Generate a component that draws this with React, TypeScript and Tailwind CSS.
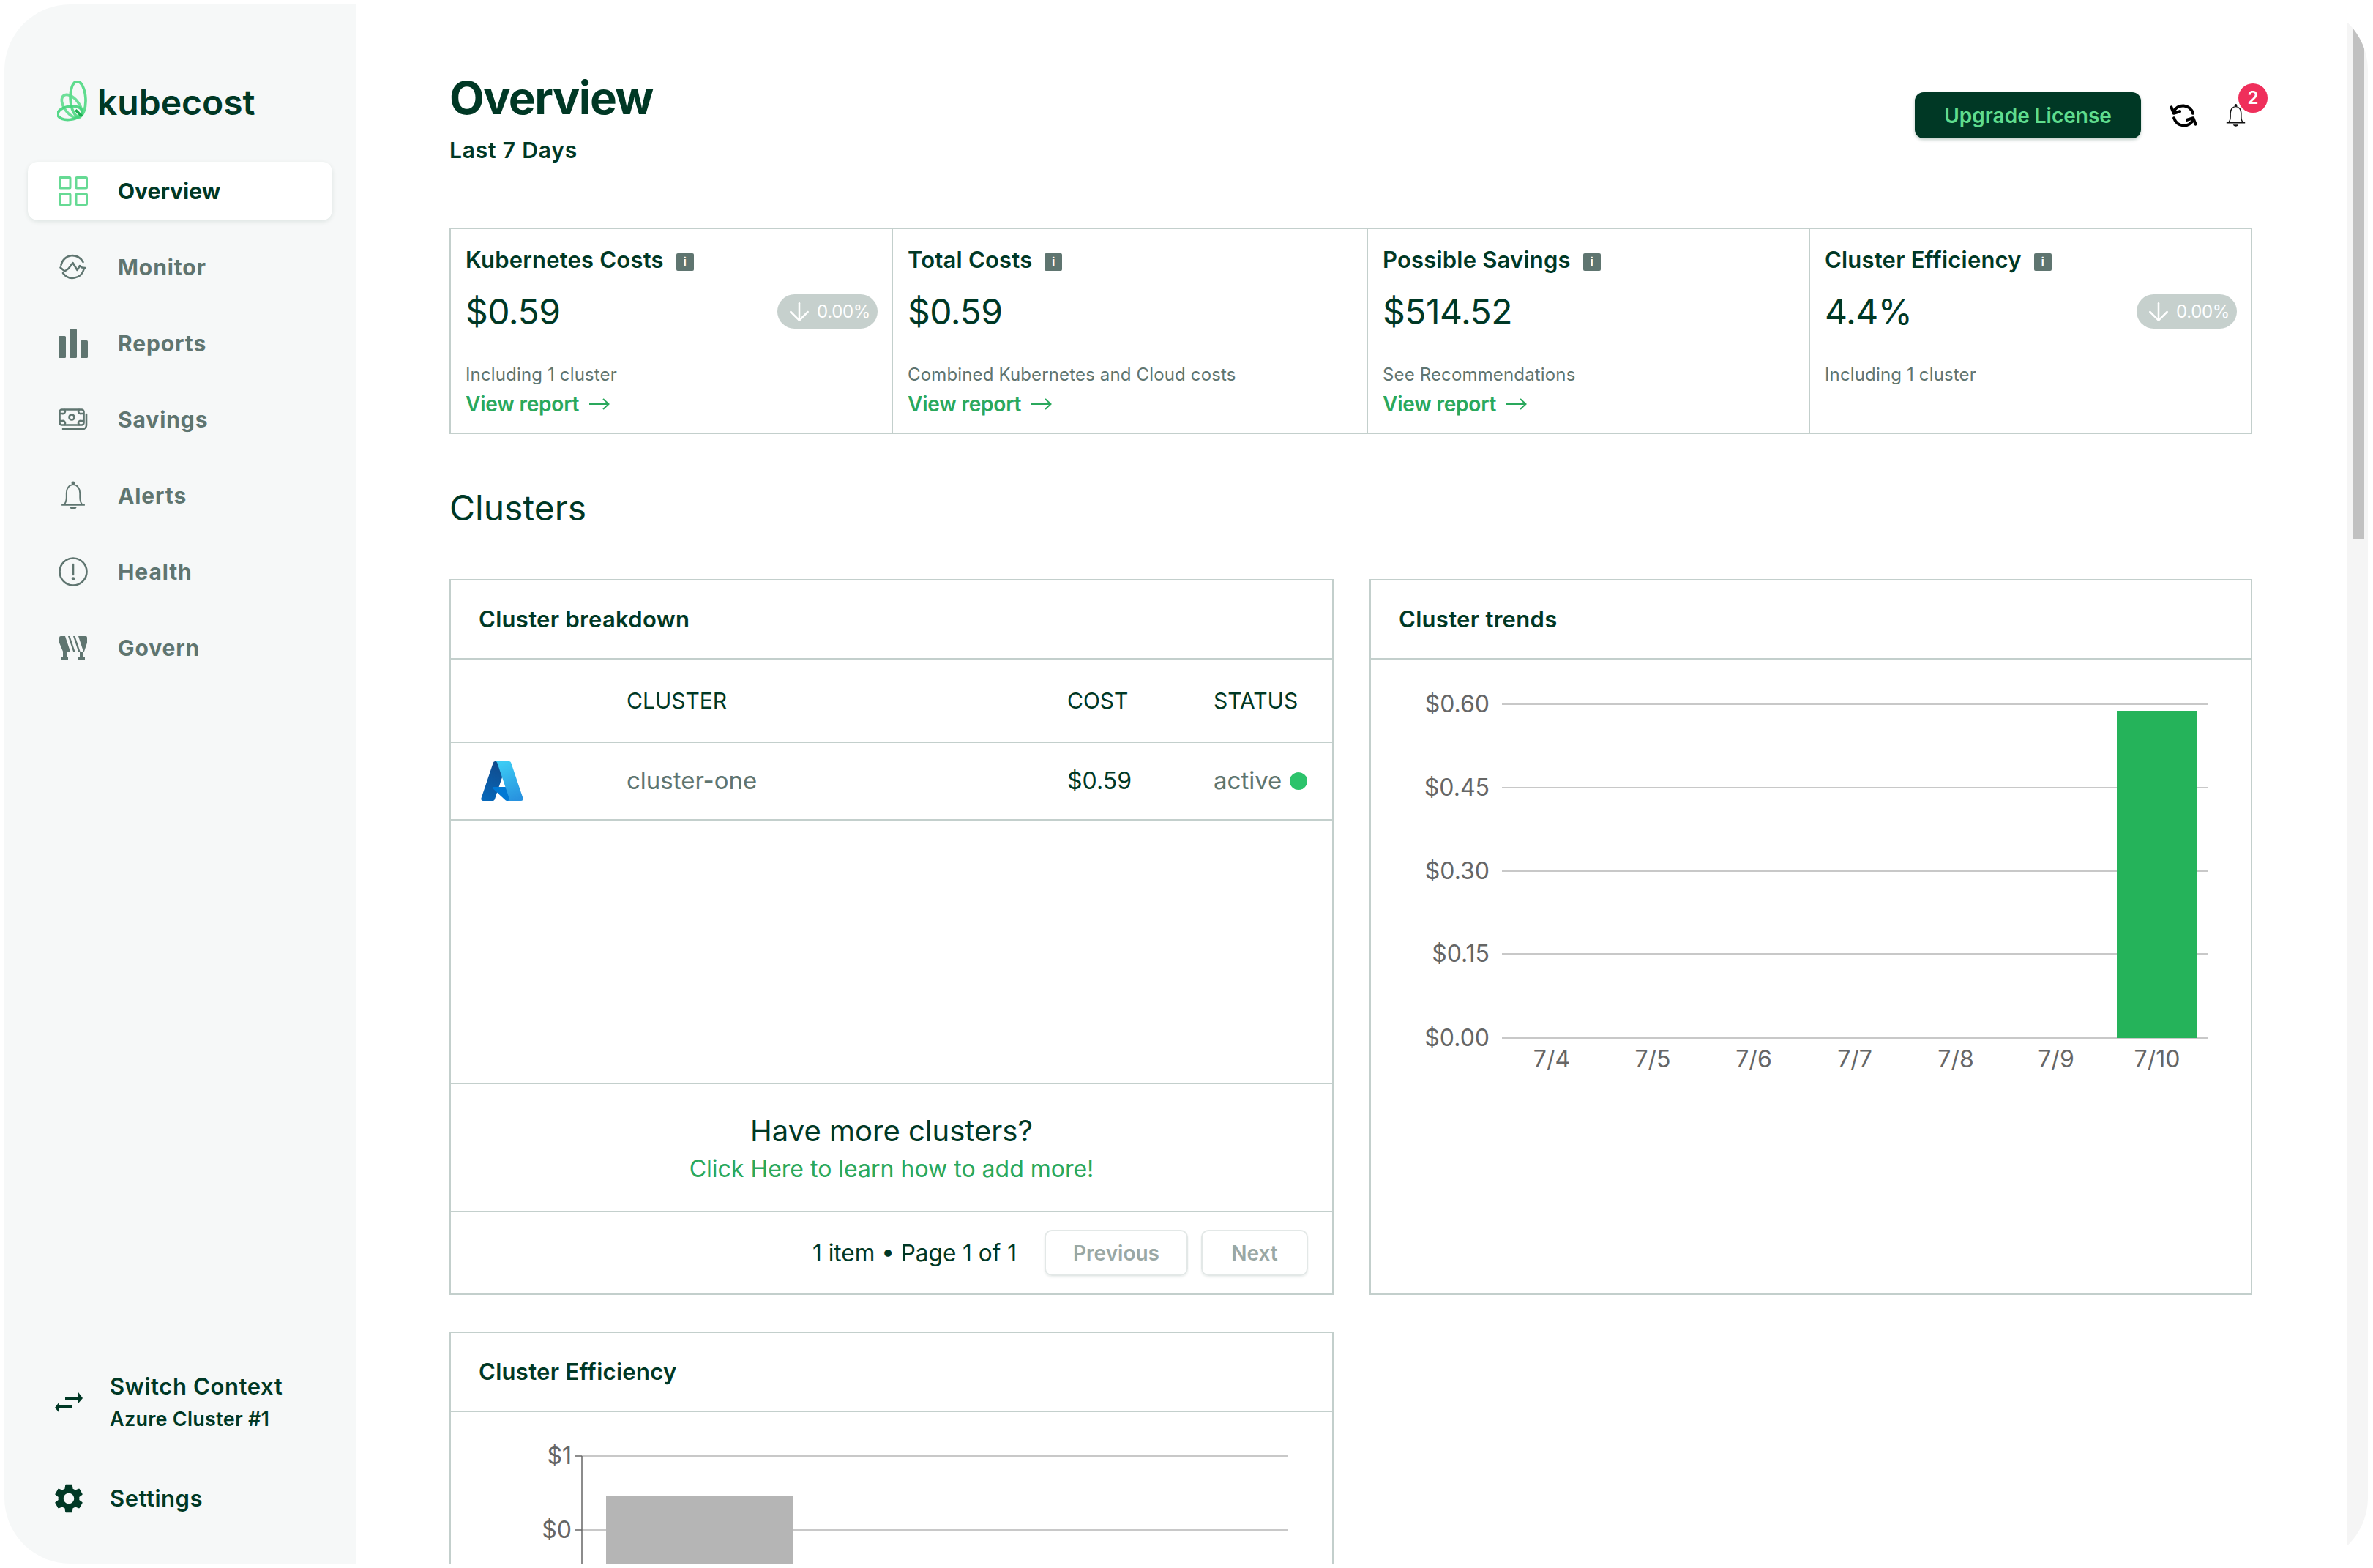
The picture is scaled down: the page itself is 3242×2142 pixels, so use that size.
import { ArrowDown } from "lucide-react";
import { MdSettings } from "react-icons/md";

const dark = "#003825";

const GridIcon = () => (
  <svg width="40" height="40" viewBox="0 0 40 40" fill="none" stroke="#66da94" strokeWidth="3">
    <rect x="1.5" y="1.5" width="14.5" height="14.5" rx="1" />
    <rect x="24" y="1.5" width="14.5" height="14.5" rx="1" />
    <rect x="1.5" y="24" width="14.5" height="14.5" rx="1" />
    <rect x="24" y="24" width="14.5" height="14.5" rx="1" />
  </svg>
);

const MonitorIcon = () => (
  <svg width="40" height="40" viewBox="0 0 40 40" fill="none" stroke="#5f7570" strokeWidth="2.6" strokeLinecap="round" strokeLinejoin="round">
    <path d="M3.5 17a16 16 0 0 1 30-4" />
    <path d="M6 28a16 16 0 0 0 28.5-5" />
    <path d="M2.5 20.5l6 5 5-3.5 6-8 6 10 3.5-6 3 2.500 4.500 .5" />
  </svg>
);

const BarsIcon = () => (
  <svg width="40" height="40" viewBox="0 0 40 40" fill="#5f7570">
    <rect x="0" y="10" width="10" height="30" rx="1.500" />
    <rect x="15" y="0" width="10" height="40" rx="1.500" />
    <rect x="30" y="16" width="10" height="24" rx="1.500" />
  </svg>
);

const MoneyIcon = () => (
  <svg width="40" height="30" viewBox="0 0 40 30" fill="none" stroke="#5f7570" strokeWidth="2.6" strokeLinejoin="round" strokeLinecap="round">
    <rect x="1.500" y="1.500" width="33" height="21" rx="3" />
    <circle cx="18" cy="12" r="3.500" />
    <path d="M2 7h3a3 3 0 0 0 3-5M34 7h-3a3 3 0 0 1-3-5M2 17h3a3 3 0 0 1 3 5M34 17h-3a3 3 0 0 0-3 5" />
    <path d="M6 28h27a5 5 0 0 0 5-5V8" />
  </svg>
);

const Bell = ({ color, width, height }: { color: string; width: number; height: number }) => (
  <svg width={width} height={height} viewBox="0 0 33 39" fill="none" stroke={color} strokeWidth="1.800" strokeLinejoin="round">
    <path d="M1 32h31M4 32c2.500-2.500 3.500-6 3.500-10v-6C7.500 10 11 5 16.500 5S25.500 10 25.500 16v6c0 4 1 7.500 3.500 10" />
    <circle cx="16.500" cy="3" r="1.500" fill={color} />
    <path d="M12 35h9c-1 4-8 4-9 0z" fill={color} stroke="none" />
  </svg>
);

const HealthIcon = () => (
  <svg width="40" height="40" viewBox="0 0 40 40" fill="none" stroke="#5f7570" strokeWidth="2.600" strokeLinecap="round">
    <circle cx="20" cy="20" r="18.500" />
    <path d="M20 10v14" />
    <circle cx="20" cy="29.500" r="1" fill="#5f7570" />
  </svg>
);

const GovernIcon = () => (
  <svg width="38" height="33" viewBox="0 0 38 33" fill="#5f7570">
    <path d="M2 0h6l7 21H5L0 9V2a2 2 0 0 1 2-2z" />
    <path d="M12 0h2.500l7 21H19z" />
    <path d="M19 0h2.500l7 21H26z" />
    <path d="M26 0h10a2 2 0 0 1 2 2v7l-4 12h-1z" />
    <rect x="5" y="21" width="5" height="8" />
    <rect x="3" y="29" width="9" height="4" />
    <rect x="28" y="21" width="5" height="8" />
    <rect x="26" y="29" width="9" height="4" />
  </svg>
);

const Logo = () => (
  <svg width="42" height="57" viewBox="115 90 125 170" fill="none" strokeWidth="11">
    <ellipse cx="200" cy="165" rx="31" ry="72" stroke="#5fdc8e" transform="rotate(-3 200 165)" />
    <ellipse cx="175" cy="195" rx="30" ry="55" stroke="#5fdc8e" strokeOpacity="0.9" transform="rotate(-38 175 195)" />
    <ellipse cx="167" cy="222" rx="50" ry="27" stroke="#45d47c" strokeOpacity="0.9" transform="rotate(-8 167 222)" />
    <path d="M190 210q15 15 26 25" stroke="#1fae52" />
  </svg>
);

const SwapIcon = () => (
  <svg width="38" height="30" viewBox="0 0 38 30" fill={dark}>
    <path d="M14 7h18V1l6 8-6 7v-5H14z" />
    <path d="M24 19H6v-5l-6 8 6 7v-6h18z" />
  </svg>
);

const RefreshIcon = () => (
  <svg width="40" height="38" viewBox="0 0 24 23" fill="none" stroke="#000" strokeWidth="2.500" strokeLinecap="round" strokeLinejoin="round">
    <path d="M3.800 8.500a8.500 8.500 0 0 1 16 1" />
    <path d="M20.200 14.500a8.500 8.500 0 0 1-16-1" />
    <path d="M2 4.500l2 5 5-1.500" />
    <path d="M22 18.500l-2-5-5 1.500" />
  </svg>
);

const AzureLogo = () => (
  <svg width="60" height="58" viewBox="2 5 92 86">
    <defs>
      <linearGradient id="az-a" x1="45" y1="10" x2="8" y2="92" gradientUnits="userSpaceOnUse">
        <stop offset="0" stopColor="#114a8b" />
        <stop offset="1" stopColor="#0669bc" />
      </linearGradient>
      <linearGradient id="az-b" x1="52" y1="8" x2="82" y2="86" gradientUnits="userSpaceOnUse">
        <stop offset="0" stopColor="#3ccbf4" />
        <stop offset="1" stopColor="#2892df" />
      </linearGradient>
    </defs>
    <path d="M33.340 6.540h26.040l-27.030 80.100a4.150 4.150 0 0 1-3.940 2.810H8.150a4.140 4.140 0 0 1-3.930-5.470L29.400 9.380a4.150 4.150 0 0 1 3.940-2.840z" fill="url(#az-a)" />
    <path d="M71.170 60.260H29.880a1.910 1.910 0 0 0-1.300 3.310l26.530 24.760a4.170 4.170 0 0 0 2.850 1.130h23.380z" fill="#0078d4" />
    <path d="M66.600 9.360a4.140 4.140 0 0 0-3.930-2.820H33.650a4.150 4.150 0 0 1 3.930 2.820l25.180 74.620a4.150 4.150 0 0 1-3.930 5.480h29.020a4.150 4.150 0 0 0 3.930-5.480z" fill="url(#az-b)" />
  </svg>
);

const LongArrow = () => (
  <svg width="28" height="20" viewBox="0 0 28 20" fill="none" stroke="#2aa85c" strokeWidth="2">
    <path d="M0 10h26.500M19 3l7.500 7-7.500 7" />
  </svg>
);

const navItems = [
  { label: "Monitor", icon: <MonitorIcon /> },
  { label: "Reports", icon: <BarsIcon /> },
  { label: "Savings", icon: <MoneyIcon /> },
  { label: "Alerts", icon: <Bell color="#5f7570" width={34} height={40} /> },
  { label: "Health", icon: <HealthIcon /> },
  { label: "Govern", icon: <GovernIcon /> },
];

const Sidebar = () => (
  <aside className="w-[480px] shrink-0 bg-[#f6f8f8] flex flex-col px-[32px] pt-[104px] pb-[69px]">
    <div className="flex items-center gap-[13px] pl-[40px] h-[56px]">
      <Logo />
      <span className="mt-[3px] text-[48px] font-semibold text-[#003825]">kubecost</span>
    </div>
    <nav className="mt-[55px] flex flex-col gap-[24px]">
      <div className="h-[80px] rounded-[14px] bg-white shadow-[0_2px_6px_rgba(0,56,37,0.1)] flex items-center pl-[42px] gap-[41px]">
        <GridIcon />
        <span className="text-[30px] font-bold text-[#003825]">Overview</span>
      </div>
      {navItems.map((item) => (
        <div key={item.label} className="h-[80px] flex items-center pl-[42px] gap-[41px]">
          <span className="w-[40px] flex justify-center">{item.icon}</span>
          <span className="text-[30px] font-bold tracking-[0.9px] text-[#5f7570]">{item.label}</span>
        </div>
      ))}
    </nav>
    <div className="mt-auto flex flex-col pl-[37px] text-[#003825]">
      <div className="flex items-center gap-[37px]">
        <span className="w-[38px]">
          <SwapIcon />
        </span>
        <div>
          <div className="text-[31px] leading-[36px] font-semibold tracking-[0.6px]">Switch Context</div>
          <div className="text-[27px] leading-[32px] mt-[11px] font-semibold tracking-[0.25px]">Azure Cluster #1</div>
        </div>
      </div>
      <div className="mt-[72px] flex items-center gap-[37px] h-[40px]">
        <span className="w-[38px] flex justify-center">
          <MdSettings size={48} color={dark} className="shrink-0" />
        </span>
        <span className="text-[31px] font-semibold tracking-[0.5px]">Settings</span>
      </div>
    </div>
  </aside>
);

const InfoBadge = () => (
  <span className="mt-[6px] w-[24px] h-[24px] rounded-[2px] bg-[#5f7570] text-white text-[17px] leading-none flex items-center justify-center">i</span>
);

const Pill = () => (
  <span className="mr-[-2px] h-[47px] w-[137px] rounded-full bg-[#c6d0cd] text-white flex items-center justify-center gap-[4px] text-[24px] tracking-[-0.3px]">
    <ArrowDown size={40} strokeWidth={1.500} />
    0.00%
  </span>
);

const ViewReport = () => (
  <a className="mt-[7px] flex items-center gap-[14px] h-[36px] text-[28px] font-semibold tracking-[-0.2px] text-[#2aa85c]">
    View report
    <LongArrow />
  </a>
);

const statCards = [
  { title: "Kubernetes Costs", value: "$0.59", pill: true, sub: "Including 1 cluster", link: true },
  { title: "Total Costs", value: "$0.59", pill: false, sub: "Combined Kubernetes and Cloud costs", link: true },
  { title: "Possible Savings", value: "$514.52", pill: false, sub: "See Recommendations", link: true },
  { title: "Cluster Efficiency", value: "4.4%", pill: true, sub: "Including 1 cluster", link: false },
];

const StatRow = () => (
  <div className="mt-[88px] h-[282px] border-2 border-[#c3cfcc] grid grid-cols-[604px_649px_604px_1fr]">
    {statCards.map((card, i) => (
      <div key={card.title} className={i < 3 ? "pl-[20px] pr-[21px] pt-[24px] border-r-2 border-[#c3cfcc]" : "pl-[20px] pr-[21px] pt-[24px]"}>
        <div className="flex items-center gap-[17px] h-[36px] text-[31px] font-semibold tracking-[0.2px] text-[#003825]">
          {card.title}
          <InfoBadge />
        </div>
        <div className="mt-[29px] h-[47px] flex items-center justify-between">
          <span className="text-[48px] tracking-[-0.5px] text-[#003825]">{card.value}</span>
          {card.pill && <Pill />}
        </div>
        <div className="mt-[48px] h-[30px] leading-[30px] text-[24px] tracking-[0.15px] text-[#5f7570]">{card.sub}</div>
        {card.link && <ViewReport />}
      </div>
    ))}
  </div>
);

const CardTitle = ({ children }: { children: string }) => (
  <div className="h-[108px] shrink-0 border-b-2 border-[#c3cfcc] flex items-center pl-[38px] text-[31px] font-semibold tracking-[0.3px] text-[#003825]">
    {children}
  </div>
);

const tableCols = "grid grid-cols-[240px_602px_200px_162px] items-center";

const ClusterBreakdown = () => (
  <div className="h-[978px] border-2 border-[#c3cfcc] flex flex-col">
    <CardTitle>Cluster breakdown</CardTitle>
    <div className={`${tableCols} h-[114px] border-b-2 border-[#c3cfcc] text-[30px] text-[#003825]`}>
      <span />
      <span>CLUSTER</span>
      <span>COST</span>
      <span>STATUS</span>
    </div>
    <div className={`${tableCols} h-[106px] border-b-2 border-[#c3cfcc]`}>
      <span className="pl-[40px]">
        <AzureLogo />
      </span>
      <span className="text-[33px] text-[#5f7570]">cluster-one</span>
      <span className="text-[32px] text-[#003825]">$0.59</span>
      <span className="flex items-center gap-[11px] text-[33px] text-[#5f7570]">
        active
        <span className="w-[24px] h-[24px] rounded-full bg-[#2cc36b]" />
      </span>
    </div>
    <div className="h-[360px] border-b-2 border-[#c3cfcc]" />
    <div className="h-[175px] border-b-2 border-[#c3cfcc] flex flex-col items-center pt-[39px]">
      <div className="text-[40px] leading-[50px] text-[#003825]">Have more clusters?</div>
      <a className="mt-[5px] text-[32px] leading-[44px] text-[#2aa85c]">Click Here to learn how to add more!</a>
    </div>
    <div className="flex-1 flex items-center justify-end pr-[33px] text-[31.500px] text-[#003825]">
      <span>1 item • Page 1 of 1</span>
      <button className="ml-[38px] w-[196px] h-[63px] rounded-[10px] border-2 border-[#e3e8e7] shadow-[0_2px_3px_rgba(0,56,37,0.08)] text-[28px] font-semibold text-[#9aa8a5]">Previous</button>
      <button className="ml-[18px] w-[146px] h-[63px] rounded-[10px] border-2 border-[#e3e8e7] shadow-[0_2px_3px_rgba(0,56,37,0.08)] text-[28px] font-semibold text-[#9aa8a5]">Next</button>
    </div>
  </div>
);

const trendY = [
  { y: 962, label: "$0.60" },
  { y: 1076, label: "$0.45" },
  { y: 1190, label: "$0.30" },
  { y: 1303, label: "$0.15" },
  { y: 1418, label: "$0.00" },
];

const trendX = [
  { x: 2120, label: "7/4" },
  { x: 2258, label: "7/5" },
  { x: 2396, label: "7/6" },
  { x: 2534, label: "7/7" },
  { x: 2672, label: "7/8" },
  { x: 2809, label: "7/9" },
  { x: 2947, label: "7/10" },
];

const ClusterTrends = () => (
  <div className="h-[978px] border-2 border-[#c3cfcc] flex flex-col">
    <CardTitle>Cluster trends</CardTitle>
    <svg width="1202" height="866" viewBox="1873 901 1202 866" className="shrink-0 font-[Inter,sans-serif]">
      {trendY.map((t) => (
        <g key={t.label}>
          <line x1="2052" x2="3016" y1={t.y} y2={t.y} stroke="#c8c8c8" strokeWidth="2" />
          <text x="2035" y={t.y + 11} textAnchor="end" fontSize="32" fill="#666">
            {t.label}
          </text>
        </g>
      ))}
      <rect x="2892" y="971" width="110" height="447" fill="#25b35a" />
      {trendX.map((t) => (
        <text key={t.label} x={t.x} y="1458" textAnchor="middle" fontSize="32" fill="#666">
          {t.label}
        </text>
      ))}
    </svg>
  </div>
);

const ClusterEfficiency = () => (
  <div className="h-[420px] border-2 border-[#c3cfcc] flex flex-col">
    <CardTitle>Cluster Efficiency</CardTitle>
    <svg width="1204" height="306" viewBox="616 1930 1204 306" className="shrink-0 font-[Inter,sans-serif]">
      <line x1="795" x2="1760" y1="1990" y2="1990" stroke="#c8c8c8" strokeWidth="2" />
      <line x1="795" x2="1760" y1="2091" y2="2091" stroke="#c8c8c8" strokeWidth="2" />
      <rect x="828" y="2044" width="256" height="200" fill="#b5b5b5" />
      <line x1="795" x2="795" y1="1990" y2="2240" stroke="#666" strokeWidth="1.500" />
      <line x1="785" x2="795" y1="1990" y2="1990" stroke="#666" strokeWidth="1.500" />
      <line x1="785" x2="795" y1="2091" y2="2091" stroke="#666" strokeWidth="1.500" />
      <text x="781" y="2001" textAnchor="end" fontSize="32" fill="#666">
        $1
      </text>
      <text x="781" y="2102" textAnchor="end" fontSize="32" fill="#666">
        $0
      </text>
    </svg>
  </div>
);

const Header = () => (
  <header className="flex justify-between items-start">
    <div>
      <h1 className="text-[62px] leading-[70px] font-bold tracking-[-1.500px] text-[#003825]">Overview</h1>
      <div className="mt-[18px] text-[30px] leading-[36px] font-semibold tracking-[0.8px] text-[#003825]">Last 7 Days</div>
    </div>
    <div className="mt-[27px] mr-[-22px] flex items-center">
      <button className="w-[309px] h-[63px] rounded-[12px] bg-[#003825] shadow-[0_2px_4px_rgba(0,56,37,0.25)] text-[28px] font-semibold text-[#5fdc8e]">Upgrade License</button>
      <span className="ml-[38px]">
        <RefreshIcon />
      </span>
      <span className="ml-[38px] relative h-[33px] flex items-center w-[58px]">
        <Bell color="#111" width={27} height={33} />
        <span className="absolute left-[17px] top-[-27px] w-[40px] h-[40px] rounded-full bg-[#ef2f5b] text-white text-[24px] font-semibold flex items-center justify-center">2</span>
      </span>
    </div>
  </header>
);

const Scrollbar = () => (
  <div className="w-[29px] shrink-0 bg-[#f5f5f5] pl-[8px] pr-[5px]">
    <div className="h-[730px] bg-[#c1c1c1]" />
  </div>
);

export default function App() {
  return (
    <div className="w-[3242px] h-[2142px] overflow-hidden bg-white pl-[6px] pr-[7px] py-[6px] font-[Inter,sans-serif]">
      <div className="h-full flex rounded-[90px] overflow-hidden bg-white">
        <Sidebar />
        <main className="flex-1 min-w-0 overflow-hidden pl-[128px] pr-[129px] pt-[93px]">
          <Header />
          <StatRow />
          <h2 className="mt-[71px] text-[48px] leading-[60px] text-[#003825]">Clusters</h2>
          <div className="mt-[67px] grid grid-cols-[1208px_1206px] gap-x-[49px] gap-y-[50px]">
            <ClusterBreakdown />
            <ClusterTrends />
            <ClusterEfficiency />
          </div>
        </main>
        <Scrollbar />
      </div>
    </div>
  );
}
